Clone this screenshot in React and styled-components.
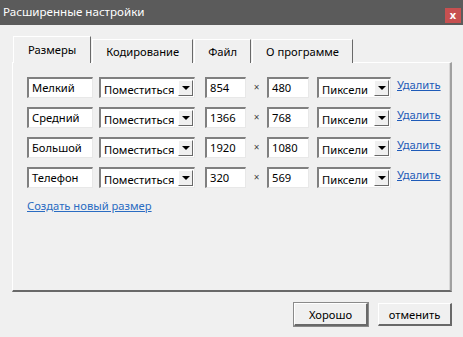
import React, { useState } from "react";
import styled, { createGlobalStyle } from "styled-components";

const GlobalStyle = createGlobalStyle`
  html, body {
    margin: 0;
    padding: 0;
    background: #f0f0f0;
  }
  body {
    font-family: "Noto Sans", "Open Sans", Arial, sans-serif;
    font-size: 11.2px;
    color: #000;
  }
`;

const sizes = [
  { name: "Мелкий", w: "854", h: "480" },
  { name: "Средний", w: "1366", h: "768" },
  { name: "Большой", w: "1920", h: "1080" },
  { name: "Телефон", w: "320", h: "569" },
];

const tabs = ["Размеры", "Кодирование", "Файл", "О программе"];

export default function App() {
  const [active, setActive] = useState(0);

  return (
    <Window>
      <GlobalStyle />
      <TitleBar>
        <span>Расширенные настройки</span>
        <CloseButton>x</CloseButton>
      </TitleBar>

      <Body>
        <TabStrip>
          {tabs.map((t, i) => (
            <Tab key={t} $active={i === active} onClick={() => setActive(i)}>
              {t}
            </Tab>
          ))}
        </TabStrip>

        <Panel>
          {sizes.map((s) => (
            <Row key={s.name}>
              <TextBox $width={66}>{s.name}</TextBox>
              <Select $width={96}>
                <span>Поместиться</span>
                <DropButton>
                  <Arrow />
                </DropButton>
              </Select>
              <TextBox $width={41} $ml={10}>{s.w}</TextBox>
              <Times>×</Times>
              <TextBox $width={42}>{s.h}</TextBox>
              <Select $width={74} $ml={8}>
                <span>Пиксели</span>
                <DropButton>
                  <Arrow />
                </DropButton>
              </Select>
              <Link $ml={6}>Удалить</Link>
            </Row>
          ))}
          <NewLink>Создать новый размер</NewLink>
        </Panel>

        <Footer>
          <Button $default>Хорошо</Button>
          <Button>отменить</Button>
        </Footer>
      </Body>
    </Window>
  );
}

const Window = styled.div`
  width: 463px;
  height: 337px;
  display: flex;
  flex-direction: column;
  background: #f0f0f0;
  overflow: hidden;
`;

const TitleBar = styled.div`
  height: 25px;
  flex-shrink: 0;
  background: #5b5b5b;
  color: #fff;
  display: flex;
  justify-content: space-between;
  align-items: flex-start;
  padding-left: 3px;
  font-size: 11.6px;
  line-height: 24px;

  span {
    white-space: nowrap;
  }
`;

const CloseButton = styled.div`
  width: 16px;
  height: 15px;
  margin-top: 8px;
  margin-right: 2px;
  background: #c75050;
  color: #fff;
  font-weight: bold;
  font-size: 11px;
  line-height: 13px;
  text-align: center;
`;

const Body = styled.div`
  flex: 1;
  display: flex;
  flex-direction: column;
  padding: 11px 11px 0 12px;
`;

const TabStrip = styled.div`
  display: flex;
  align-items: flex-end;
  padding-left: 1px;
  height: 27px;
  position: relative;
  z-index: 1;
  margin-bottom: -1px;
`;

const Tab = styled.div`
  box-sizing: border-box;
  height: ${(p) => (p.$active ? 27 : 24)}px;
  padding: 0 ${(p) => (p.$active ? 14 : 13)}px;
  margin-right: 1px;
  background: #f0f0f0;
  border-top: 1px solid #fff;
  border-left: 1px solid #fff;
  border-right: 1px solid #696969;
  display: flex;
  align-items: center;
  padding-bottom: ${(p) => (p.$active ? 2 : 0)}px;
  white-space: nowrap;
  cursor: default;
`;

const Panel = styled.div`
  box-sizing: border-box;
  height: 230px;
  border-top: 1px solid #fff;
  border-left: 1px solid #fff;
  border-right: 2px solid #a0a0a0;
  border-bottom: 2px solid #696969;
  box-shadow: inset -1px 0 0 #d8d8d8;
  padding: 14px 0 0 14px;
  display: flex;
  flex-direction: column;
  gap: 9px;
`;

const Row = styled.div`
  display: flex;
  align-items: flex-start;
  height: 21px;
`;

const TextBox = styled.div`
  box-sizing: border-box;
  width: ${(p) => p.$width}px;
  margin-left: ${(p) => p.$ml || 0}px;
  height: 21px;
  background: #fff;
  border-top: 2px solid #808080;
  border-left: 2px solid #808080;
  border-right: 1px solid #e8e8e8;
  border-bottom: 1px solid #e8e8e8;
  padding-left: 3px;
  line-height: 17px;
  white-space: nowrap;
  overflow: hidden;
`;

const Select = styled.div`
  box-sizing: border-box;
  width: ${(p) => p.$width}px;
  margin-left: ${(p) => p.$ml || 6}px;
  height: 21px;
  background: #fff;
  border-top: 2px solid #808080;
  border-left: 2px solid #808080;
  border-right: 1px solid #e8e8e8;
  border-bottom: 1px solid #e8e8e8;
  display: flex;
  justify-content: space-between;
  align-items: flex-start;
  padding-left: 3px;

  span {
    line-height: 19px;
    padding-top: 1px;
    white-space: nowrap;
    overflow: hidden;
  }
`;

const DropButton = styled.div`
  box-sizing: border-box;
  width: 15px;
  height: 16px;
  margin: 1px 1px 0 0;
  flex-shrink: 0;
  background: #f0f0f0;
  border-top: 1px solid #fff;
  border-left: 1px solid #fff;
  border-right: 1px solid #696969;
  border-bottom: 1px solid #696969;
  display: flex;
  align-items: center;
  justify-content: center;
`;

const Arrow = styled.div`
  width: 0;
  height: 0;
  border-left: 4px solid transparent;
  border-right: 4px solid transparent;
  border-top: 4px solid #000;
`;

const Times = styled.div`
  width: 21px;
  text-align: center;
  font-size: 10px;
  line-height: 21px;
  color: #444;
`;

const Link = styled.a`
  margin-left: ${(p) => p.$ml || 0}px;
  color: #1e5bb8;
  text-decoration: underline;
  line-height: 16px;
  cursor: pointer;
  white-space: nowrap;
`;

const NewLink = styled(Link)`
  margin-top: 1px;
  align-self: flex-start;
  color: #2a6cc2;
`;

const Footer = styled.div`
  display: flex;
  justify-content: flex-end;
  gap: 10px;
  padding-top: 11px;
`;

const Button = styled.button`
  box-sizing: border-box;
  width: 74px;
  height: 23px;
  font-family: inherit;
  font-size: 11.2px;
  color: #000;
  background: #f0f0f0;
  border-top: 1px solid #fff;
  border-left: 1px solid #fff;
  border-right: 2px solid #696969;
  border-bottom: 2px solid #696969;
  box-shadow: ${(p) => (p.$default ? "0 0 0 1px #8a8a8a" : "none")};
  padding: 0;
`;
